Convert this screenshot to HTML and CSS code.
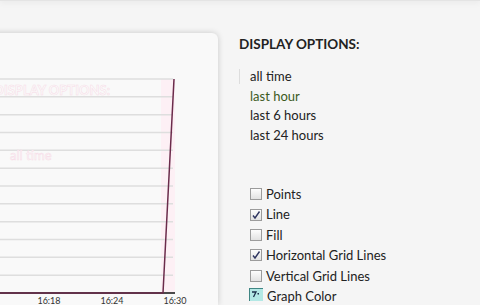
FILE: index.html
```html
<!DOCTYPE html>
<html lang="en">
<head>
  <meta charset="UTF-8" />
  <meta name="viewport" content="width=device-width, initial-scale=1.0"/>
  <title>Graph - Display Options</title>
  <link rel="stylesheet" href="styles.css">
</head>
<body>

<!-- Header shadow -->
<div class="topbar"></div>

<div class="main">

  <!-- Graph Card -->
  <div class="card">
    <svg class="chart" width="200" height="234" viewBox="0 0 200 234">
      <rect x="161" y="9" width="14" height="214" fill="#fdf0f5" />
      <g stroke="#dedede" stroke-width="1.5">
        <line x1="0" y1="9" x2="173" y2="9" />
        <line x1="0" y1="26.8" x2="173" y2="26.8" />
        <line x1="0" y1="44.7" x2="173" y2="44.7" />
        <line x1="0" y1="62.5" x2="173" y2="62.5" />
        <line x1="0" y1="80.3" x2="173" y2="80.3" />
        <line x1="0" y1="98.2" x2="173" y2="98.2" />
        <line x1="0" y1="116" x2="173" y2="116" />
        <line x1="0" y1="133.8" x2="173" y2="133.8" />
        <line x1="0" y1="151.7" x2="173" y2="151.7" />
        <line x1="0" y1="169.5" x2="173" y2="169.5" />
        <line x1="0" y1="187.3" x2="173" y2="187.3" />
        <line x1="0" y1="205.2" x2="173" y2="205.2" />
      </g>
      <text class="ghost" x="-6" y="25" font-weight="bold">DISPLAY OPTIONS:</text>
      <text class="ghost" x="10" y="90">all time</text>
      <line x1="0" y1="223" x2="175" y2="223" stroke="#111" stroke-width="1.5" />
      <path d="M0 223 L163 223 L174 9" fill="none" stroke="#6b2b4b" stroke-width="1.5" />
      <g class="tick">
        <text x="49" y="234">16:18</text>
        <text x="112" y="234">16:24</text>
        <text x="175" y="234">16:30</text>
      </g>
    </svg>
  </div>

  <!-- Display Options -->
  <div class="sidebar">
    <h3>DISPLAY OPTIONS:</h3>

    <ul class="range-list">
      <li class="selected">all time</li>
      <li class="current">last hour</li>
      <li>last 6 hours</li>
      <li>last 24 hours</li>
    </ul>

    <ul class="option-list">
      <li><span class="box"></span>Points</li>
      <li><span class="box checked"><svg width="10" height="10" viewBox="0 0 10 10"><path d="M2 5.5 L4 8 L8.5 1.5" fill="none" stroke="#2e3560" stroke-width="1.4"/></svg></span>Line</li>
      <li><span class="box"></span>Fill</li>
      <li><span class="box checked"><svg width="10" height="10" viewBox="0 0 10 10"><path d="M2 5.5 L4 8 L8.5 1.5" fill="none" stroke="#2e3560" stroke-width="1.4"/></svg></span>Horizontal Grid Lines</li>
      <li><span class="box"></span>Vertical Grid Lines</li>
      <li>
        <svg class="swatch" width="14" height="13" viewBox="0 0 14 13">
          <rect x="0" y="0" width="14" height="13" fill="#b3e8e5" />
          <path d="M0 0.5 H14 M0.5 0 V13" stroke="#3f8583" stroke-width="1" />
          <path d="M3 4 H7 L4.5 9" fill="none" stroke="#1d2f4a" stroke-width="1.3" />
          <rect x="8.5" y="5" width="1.5" height="1.5" fill="#1d2f4a" />
        </svg>Graph Color
      </li>
    </ul>
  </div>

</div>

</body>
</html>
```

FILE: styles.css
```css
body {
  font-family: Lato, "Open Sans", sans-serif;
  background: #f5f5f5;
  margin: 0;
  padding: 0;
  color: #222;
  height: 305px;
  overflow: hidden;
}
.topbar {
  height: 1px;
  background: #e4e4e4;
  box-shadow: 0 0 6px rgba(0,0,0,0.25);
}
.main {
  display: flex;
  padding-top: 32px;
}
.card {
  width: 230px;
  height: 272px;
  margin-left: -12px;
  background: #f9f9f9;
  border-radius: 0 6px 0 0;
  box-shadow: 0 0 6px rgba(0,0,0,0.18);
  flex-shrink: 0;
}
.chart {
  display: block;
  margin: 37px 0 0 12px;
  overflow: visible;
}
.chart .ghost {
  font-family: Lato, sans-serif;
  font-size: 13px;
  fill: #fbfbfb;
  stroke: #f7dbe7;
  stroke-width: 0.5;
}
.chart .tick text {
  font-family: Lato, sans-serif;
  font-size: 9px;
  fill: #333;
  text-anchor: middle;
}
.sidebar {
  padding-left: 21px;
}
h3 {
  margin: 3px 0 0;
  font-size: 13.5px;
  line-height: 17px;
  font-weight: bold;
  color: #222;
}
.range-list {
  list-style: none;
  margin: 14px 0 0 11px;
  padding: 0;
  font-size: 13px;
  line-height: 19.5px;
}
.range-list li.selected {
  position: relative;
}
.range-list li.selected::before {
  content: "";
  position: absolute;
  left: -11px;
  top: 2px;
  width: 1px;
  height: 15px;
  background: #ddd;
}
.range-list li.current {
  color: #3b5a1d;
}
.option-list {
  list-style: none;
  margin: 39px 0 0 11px;
  padding: 0;
  font-size: 13px;
  line-height: 20.4px;
}
.option-list li {
  display: flex;
  align-items: center;
  gap: 4px;
}
.box {
  width: 10px;
  height: 10px;
  border: 1px solid #9b9b9b;
  background: linear-gradient(#fdfdfd, #e2e2e2);
  display: flex;
  align-items: center;
  justify-content: center;
  flex-shrink: 0;
}
.swatch {
  margin-left: -1px;
  margin-top: -4px;
  flex-shrink: 0;
}
```
